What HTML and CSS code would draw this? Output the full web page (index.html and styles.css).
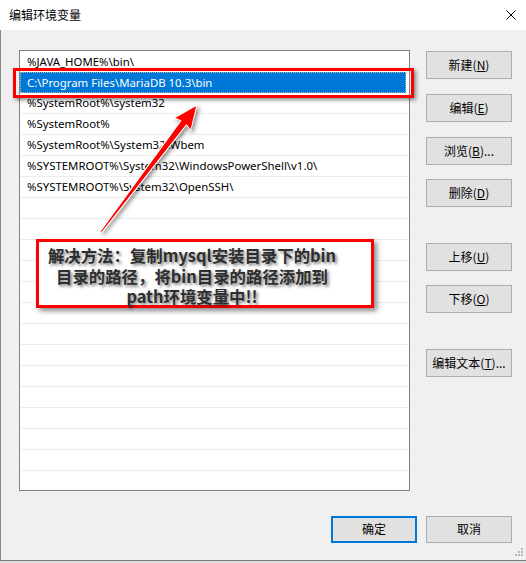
FILE: index.html
```html
<!DOCTYPE html>
<html lang="zh-CN">
<head>
<meta charset="utf-8">
<title>编辑环境变量</title>
<link rel="stylesheet" href="styles.css">
</head>
<body>
<div class="window">
  <div class="titlebar">
    <span class="title">编辑环境变量</span>
    <svg class="close" width="10" height="10" viewBox="0 0 10 10"><path d="M0.5 0.5 L9.5 9.5 M9.5 0.5 L0.5 9.5" stroke="#000" stroke-width="1" fill="none"/></svg>
  </div>
  <div class="content">
    <div class="main">
      <div class="list">
        <div class="row">%JAVA_HOME%\bin\</div>
        <div class="row selected">C:\Program Files\MariaDB 10.3\bin</div>
        <div class="row">%SystemRoot%\system32</div>
        <div class="row">%SystemRoot%</div>
        <div class="row">%SystemRoot%\System32\Wbem</div>
        <div class="row">%SYSTEMROOT%\System32\WindowsPowerShell\v1.0\</div>
        <div class="row">%SYSTEMROOT%\System32\OpenSSH\</div>
        <div class="row"></div>
        <div class="row"></div>
        <div class="row"></div>
        <div class="row"></div>
        <div class="row"></div>
        <div class="row"></div>
        <div class="row"></div>
        <div class="row"></div>
        <div class="row"></div>
        <div class="row"></div>
        <div class="row"></div>
        <div class="row"></div>
        <div class="row"></div>
        <div class="row"></div>
      </div>
      <div class="side">
        <button class="btn">新建(<u>N</u>)</button>
        <button class="btn gap-s">编辑(<u>E</u>)</button>
        <button class="btn gap-s">浏览(<u>B</u>)...</button>
        <button class="btn gap-t">删除(<u>D</u>)</button>
        <button class="btn gap-l">上移(<u>U</u>)</button>
        <button class="btn gap-t">下移(<u>O</u>)</button>
        <button class="btn gap-l">编辑文本(<u>T</u>)...</button>
      </div>
    </div>
    <div class="footer">
      <button class="btn btn-foot default">确定</button>
      <button class="btn btn-foot">取消</button>
    </div>
  </div>
  <svg class="grip" width="8" height="8" viewBox="0 0 8 8">
    <rect x="6" y="0" width="2" height="2" fill="#b8b8b8"/>
    <rect x="3" y="3" width="2" height="2" fill="#b8b8b8"/>
    <rect x="6" y="3" width="2" height="2" fill="#b8b8b8"/>
    <rect x="0" y="6" width="2" height="2" fill="#b8b8b8"/>
    <rect x="3" y="6" width="2" height="2" fill="#b8b8b8"/>
    <rect x="6" y="6" width="2" height="2" fill="#b8b8b8"/>
  </svg>

  <div class="hl-frame"></div>
  <svg class="arrow" width="526" height="563" viewBox="0 0 526 563">
    <g transform="translate(101 232) rotate(-52.9)">
      <polygon points="0,-1 137,-3.5 135,-10.5 159,0 135,10.5 137,3.5 0,1" fill="#ff0000" stroke="#ffffff" stroke-width="1" stroke-linejoin="round"/>
    </g>
  </svg>
  <div class="note">
    <div class="note-line">解决方法：复制mysql安装目录下的bin</div>
    <div class="note-line">目录的路径，将bin目录的路径添加到</div>
    <div class="note-line">path环境变量中!!</div>
  </div>
</div>
</body>
</html>
```
FILE: styles.css
```css
html, body {
  margin: 0;
  padding: 0;
  background: #dedede;
}

body {
  width: 526px;
  height: 563px;
  overflow: hidden;
  font-family: "Noto Sans", "Noto Sans CJK SC", sans-serif;
  font-size: 12px;
  color: #000;
}

.window {
  position: relative;
  width: 526px;
  background: #f0f0f0;
  border-bottom: 1px solid #7a7a7a;
}

.titlebar {
  height: 30px;
  background: #ffffff;
  display: flex;
  align-items: center;
  justify-content: space-between;
  padding-left: 9px;
  padding-right: 10px;
  padding-bottom: 2px;
  box-sizing: border-box;
}

.title {
  font-family: "Noto Sans CJK SC", sans-serif;
  font-size: 12px;
  color: #000;
}

.close {
  display: block;
  margin-bottom: -1px;
}

.content {
  height: 530px;
  box-sizing: border-box;
  border-left: 1px solid #8a8a8a;
  padding: 20px 14px 0 18px;
}

.main {
  display: flex;
  align-items: flex-start;
}

.list {
  width: 391px;
  height: 441px;
  box-sizing: border-box;
  border: 1px solid #828282;
  background: #fff;
  padding-top: 1px;
  overflow: hidden;
}

.row {
  height: 20px;
  line-height: 20px;
  border-bottom: 1px solid #ececec;
  padding-left: 7px;
  white-space: nowrap;
  color: #000;
  font-size: 11.4px;
}

.row.selected {
  background: #0078d7;
  color: #fff;
  margin-right: 3px;
  margin-top: -1px;
  height: 21px;
  line-height: 21px;
  border-bottom: none;
  box-sizing: content-box;
  outline: 1px dotted rgba(255, 214, 150, 0.7);
  outline-offset: -1px;
}

.side {
  margin-left: 16px;
  padding-top: 1px;
  display: flex;
  flex-direction: column;
  width: 86px;
}

.btn {
  width: 86px;
  height: 28px;
  box-sizing: border-box;
  background: #e1e1e1;
  border: 1px solid #adadad;
  font-family: "Noto Sans CJK SC", sans-serif;
  font-size: 12px;
  color: #000;
  padding: 0 0 2px 0;
  margin: 0;
}

.btn u {
  text-underline-offset: 1px;
}

.gap-s { margin-top: 15px; }
.gap-t { margin-top: 14px; }
.gap-l { margin-top: 36px; }

.footer {
  display: flex;
  justify-content: flex-end;
  gap: 9px;
  margin-top: 25px;
}

.btn-foot {
  height: 27px;
}

.btn.default {
  border: 2px solid #0078d7;
}

.grip {
  position: absolute;
  right: 3px;
  bottom: 4px;
}

.hl-frame {
  position: absolute;
  left: 13px;
  top: 68px;
  width: 401px;
  height: 30px;
  box-sizing: border-box;
  border: 3px solid #ff0000;
  box-shadow: 2px 2px 4px rgba(0, 0, 0, 0.45);
}

.arrow {
  position: absolute;
  left: 0;
  top: 0;
  pointer-events: none;
  filter: drop-shadow(2px 2px 2px rgba(0, 0, 0, 0.45));
}

.note {
  position: absolute;
  left: 36px;
  top: 239px;
  width: 338px;
  height: 69px;
  box-sizing: border-box;
  border: 3px solid #ff0000;
  background: #ffffff;
  box-shadow: 3px 3px 5px rgba(0, 0, 0, 0.45);
  padding: 3px 26px 0 0;
  display: flex;
  flex-direction: column;
  align-items: center;
}

.note-line {
  height: 20.5px;
  line-height: 20.5px;
  text-align: center;
  font-family: "Noto Sans CJK SC", sans-serif;
  font-weight: bold;
  font-size: 16.4px;
  color: #2e2e2e;
  text-shadow: 2px 2px 3px rgba(0, 0, 0, 0.5);
  white-space: nowrap;
}
```
